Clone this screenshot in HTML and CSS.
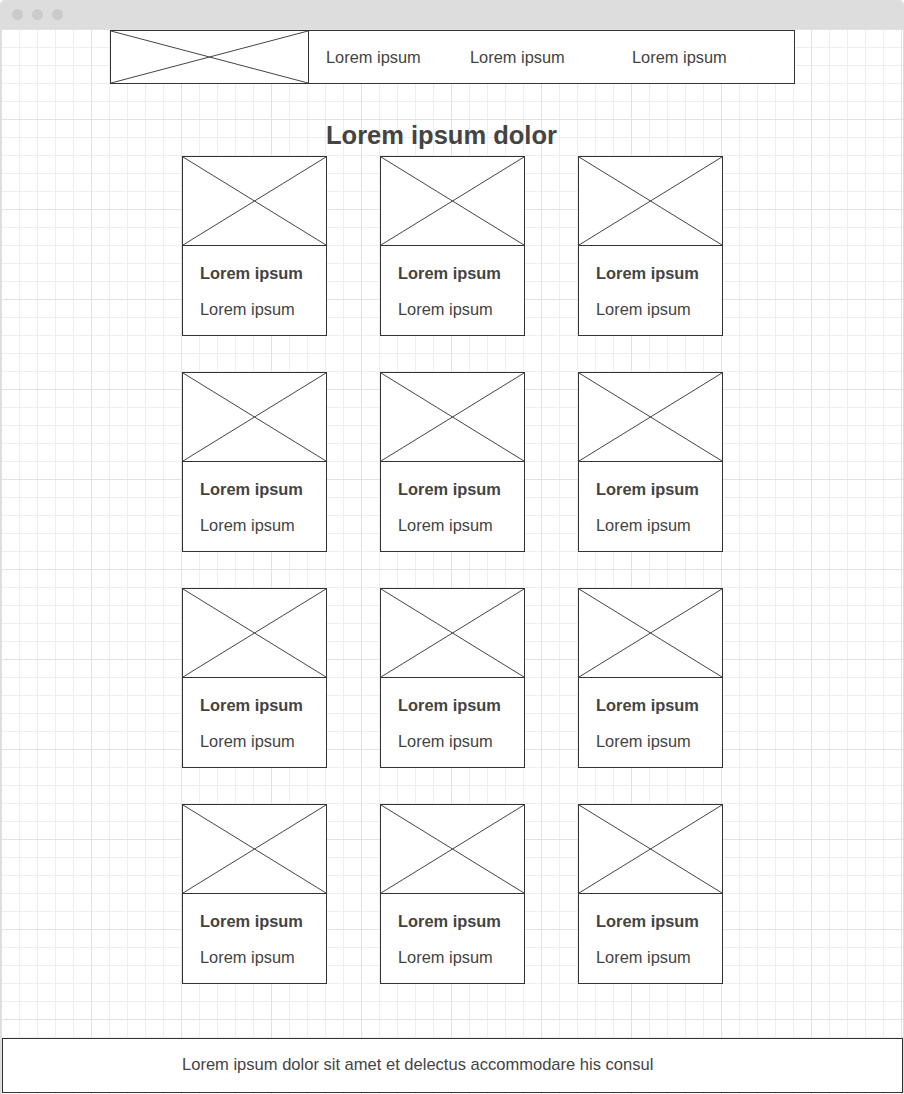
FILE: index.html
```html
<!DOCTYPE html>
<html lang="en">
<head>
<meta charset="utf-8">
<title>Wireframe</title>
<link rel="stylesheet" href="styles.css">
</head>
<body>
<div class="window">
  <div class="titlebar">
    <span class="dot"></span><span class="dot"></span><span class="dot"></span>
  </div>
  <div class="canvas">
    <header class="header">
      <div class="header-img">
        <svg class="xmark" viewBox="0 0 100 100" preserveAspectRatio="none"><line x1="0" y1="0" x2="100" y2="100"/><line x1="0" y1="100" x2="100" y2="0"/></svg>
      </div>
      <nav class="nav">
        <span class="nav-item">Lorem ipsum</span>
        <span class="nav-item">Lorem ipsum</span>
        <span class="nav-item">Lorem ipsum</span>
      </nav>
    </header>
    <h1 class="title">Lorem ipsum dolor</h1>
    <main class="cards">
      <div class="card"><div class="card-img"><svg class="xmark" viewBox="0 0 100 100" preserveAspectRatio="none"><line x1="0" y1="0" x2="100" y2="100"/><line x1="0" y1="100" x2="100" y2="0"/></svg></div><div class="card-body"><div class="card-title">Lorem ipsum</div><div class="card-text">Lorem ipsum</div></div></div>
      <div class="card"><div class="card-img"><svg class="xmark" viewBox="0 0 100 100" preserveAspectRatio="none"><line x1="0" y1="0" x2="100" y2="100"/><line x1="0" y1="100" x2="100" y2="0"/></svg></div><div class="card-body"><div class="card-title">Lorem ipsum</div><div class="card-text">Lorem ipsum</div></div></div>
      <div class="card"><div class="card-img"><svg class="xmark" viewBox="0 0 100 100" preserveAspectRatio="none"><line x1="0" y1="0" x2="100" y2="100"/><line x1="0" y1="100" x2="100" y2="0"/></svg></div><div class="card-body"><div class="card-title">Lorem ipsum</div><div class="card-text">Lorem ipsum</div></div></div>
      <div class="card"><div class="card-img"><svg class="xmark" viewBox="0 0 100 100" preserveAspectRatio="none"><line x1="0" y1="0" x2="100" y2="100"/><line x1="0" y1="100" x2="100" y2="0"/></svg></div><div class="card-body"><div class="card-title">Lorem ipsum</div><div class="card-text">Lorem ipsum</div></div></div>
      <div class="card"><div class="card-img"><svg class="xmark" viewBox="0 0 100 100" preserveAspectRatio="none"><line x1="0" y1="0" x2="100" y2="100"/><line x1="0" y1="100" x2="100" y2="0"/></svg></div><div class="card-body"><div class="card-title">Lorem ipsum</div><div class="card-text">Lorem ipsum</div></div></div>
      <div class="card"><div class="card-img"><svg class="xmark" viewBox="0 0 100 100" preserveAspectRatio="none"><line x1="0" y1="0" x2="100" y2="100"/><line x1="0" y1="100" x2="100" y2="0"/></svg></div><div class="card-body"><div class="card-title">Lorem ipsum</div><div class="card-text">Lorem ipsum</div></div></div>
      <div class="card"><div class="card-img"><svg class="xmark" viewBox="0 0 100 100" preserveAspectRatio="none"><line x1="0" y1="0" x2="100" y2="100"/><line x1="0" y1="100" x2="100" y2="0"/></svg></div><div class="card-body"><div class="card-title">Lorem ipsum</div><div class="card-text">Lorem ipsum</div></div></div>
      <div class="card"><div class="card-img"><svg class="xmark" viewBox="0 0 100 100" preserveAspectRatio="none"><line x1="0" y1="0" x2="100" y2="100"/><line x1="0" y1="100" x2="100" y2="0"/></svg></div><div class="card-body"><div class="card-title">Lorem ipsum</div><div class="card-text">Lorem ipsum</div></div></div>
      <div class="card"><div class="card-img"><svg class="xmark" viewBox="0 0 100 100" preserveAspectRatio="none"><line x1="0" y1="0" x2="100" y2="100"/><line x1="0" y1="100" x2="100" y2="0"/></svg></div><div class="card-body"><div class="card-title">Lorem ipsum</div><div class="card-text">Lorem ipsum</div></div></div>
      <div class="card"><div class="card-img"><svg class="xmark" viewBox="0 0 100 100" preserveAspectRatio="none"><line x1="0" y1="0" x2="100" y2="100"/><line x1="0" y1="100" x2="100" y2="0"/></svg></div><div class="card-body"><div class="card-title">Lorem ipsum</div><div class="card-text">Lorem ipsum</div></div></div>
      <div class="card"><div class="card-img"><svg class="xmark" viewBox="0 0 100 100" preserveAspectRatio="none"><line x1="0" y1="0" x2="100" y2="100"/><line x1="0" y1="100" x2="100" y2="0"/></svg></div><div class="card-body"><div class="card-title">Lorem ipsum</div><div class="card-text">Lorem ipsum</div></div></div>
      <div class="card"><div class="card-img"><svg class="xmark" viewBox="0 0 100 100" preserveAspectRatio="none"><line x1="0" y1="0" x2="100" y2="100"/><line x1="0" y1="100" x2="100" y2="0"/></svg></div><div class="card-body"><div class="card-title">Lorem ipsum</div><div class="card-text">Lorem ipsum</div></div></div>
    </main>
    <footer class="footer">Lorem ipsum dolor sit amet et delectus accommodare his consul</footer>
  </div>
</div>
</body>
</html>
```
FILE: styles.css
```css
* { box-sizing: border-box; }
html, body { margin: 0; padding: 0; background: #ffffff; }
body {
  font-family: "Liberation Sans", Arial, Helvetica, sans-serif;
  color: #444444;
}
.window {
  width: 904px;
  height: 1094px;
  display: flex;
  flex-direction: column;
  overflow: hidden;
}
.titlebar {
  height: 29px;
  flex: none;
  background: #dddddd;
  border-radius: 5px 5px 0 0;
  display: flex;
  align-items: center;
  gap: 9px;
  padding-left: 12px;
}
.dot {
  width: 11px;
  height: 11px;
  border-radius: 50%;
  background: #cbcbcb;
}
.canvas {
  flex: 1;
  display: flex;
  flex-direction: column;
  border-left: 1px solid #dcdcdc;
  border-right: 1px solid #dcdcdc;
  background-color: #ffffff;
  background-image:
    linear-gradient(to right, #e2e2e2 1px, transparent 1px),
    linear-gradient(to bottom, #e2e2e2 1px, transparent 1px),
    linear-gradient(to right, #eeeeee 1px, transparent 1px),
    linear-gradient(to bottom, #eeeeee 1px, transparent 1px);
  background-size: 90px 90px, 90px 90px, 18px 18px, 18px 18px;
  background-origin: padding-box;
}
.xmark {
  display: block;
  width: 100%;
  height: 100%;
}
.xmark line {
  stroke: #444444;
  stroke-width: 1;
  vector-effect: non-scaling-stroke;
}
.header {
  margin: 1px 0 0 109px;
  width: 685px;
  height: 54px;
  border: 1px solid #333333;
  background: #ffffff;
  display: flex;
}
.header-img {
  width: 198px;
  flex: none;
  border-right: 1px solid #333333;
}
.nav {
  flex: 1;
  display: grid;
  grid-template-columns: 144px 162px auto;
  align-items: center;
  padding-left: 17px;
  font-size: 16.4px;
  line-height: 20px;
}
.title {
  margin: 36px 0 0 0;
  padding-left: 325px;
  font-size: 25.5px;
  line-height: 30px;
  font-weight: bold;
  color: #444444;
}
.cards {
  margin-top: 6px;
  padding-left: 181px;
  display: grid;
  grid-template-columns: repeat(3, 145px);
  column-gap: 53px;
  row-gap: 36px;
}
.card {
  height: 180px;
  border: 1px solid #333333;
  background: #ffffff;
  display: flex;
  flex-direction: column;
}
.card-img {
  height: 89px;
  flex: none;
  border-bottom: 1px solid #333333;
}
.card-body {
  padding: 17px 0 0 17px;
  font-size: 16.4px;
  line-height: 20px;
}
.card-title { font-weight: bold; }
.card-text { margin-top: 16px; }
.footer {
  margin: auto 0 1px 1px;
  height: 55px;
  border: 1px solid #333333;
  background: #ffffff;
  display: flex;
  align-items: center;
  padding: 0 0 1px 179px;
  font-size: 16.55px;
  line-height: 20px;
}
```
